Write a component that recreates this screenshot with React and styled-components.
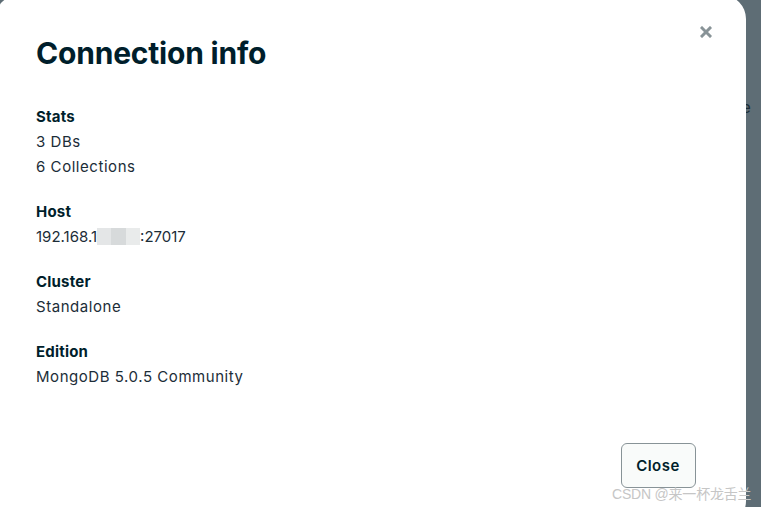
import React from 'react'
import styled, { createGlobalStyle } from 'styled-components'

const GlobalStyle = createGlobalStyle`
    html, body {
        margin: 0;
        padding: 0;
        overflow: hidden;
    }
    body {
        font-family: Inter, 'Noto Sans', sans-serif;
        background: #5e6d75;
    }
`

const stats = [
    { label: 'Stats', values: ['3 DBs', '6 Collections'] },
    { label: 'Host', host: true },
    { label: 'Cluster', values: ['Standalone'] },
    { label: 'Edition', values: ['MongoDB 5.0.5 Community'] },
]

const CloseIcon = () => (
    <svg width="12" height="12" viewBox="0 0 12 12">
        <path d="M2 2 L10 10 M10 2 L2 10" stroke="#889397" strokeWidth="3" strokeLinecap="square" />
    </svg>
)

const ConnectionInfo = () => {
    return (
        <Page>
            <GlobalStyle />
            <Modal>
                <Header>
                    <Title>Connection info</Title>
                    <IconButton aria-label="Close">
                        <CloseIcon />
                    </IconButton>
                </Header>
                <Sections>
                    {stats.map((item) => (
                        <Section key={item.label}>
                            <Label>{item.label}</Label>
                            {item.host ? (
                                <Value $tight>
                                    192.168.1
                                    <Blur>
                                        <span />
                                        <span />
                                        <span />
                                    </Blur>
                                    :27017
                                </Value>
                            ) : (
                                item.values.map((v) => <Value key={v}>{v}</Value>)
                            )}
                        </Section>
                    ))}
                </Sections>
                <Footer>
                    <Button>Close</Button>
                </Footer>
            </Modal>
            <Backdrop>
                <span>e</span>
            </Backdrop>
            <Watermark>CSDN @来一杯龙舌兰</Watermark>
        </Page>
    )
}

const Page = styled.div`
    position: relative;
    display: flex;
    height: 507px;
    width: 761px;
    overflow: hidden;
`

const Modal = styled.div`
    flex: none;
    box-sizing: border-box;
    width: 750.5px;
    height: 530px;
    margin: -5px 0 0 -5px;
    padding: 40px 50px 0 41px;
    background: #ffffff;
    border-radius: 24px;
    display: flex;
    flex-direction: column;
`

const Header = styled.div`
    display: flex;
    justify-content: space-between;
    align-items: flex-start;
`

const Title = styled.h1`
    margin: 0;
    font-size: 30px;
    line-height: 36px;
    font-weight: 700;
    color: #001e2b;
    letter-spacing: -0.2px;
`

const IconButton = styled.button`
    border: none;
    background: none;
    padding: 0;
    margin: -9px -16px 0 0;
    width: 12px;
    height: 12px;
    display: flex;
    cursor: pointer;
`

const Sections = styled.div`
    display: flex;
    flex-direction: column;
    gap: 20px;
    margin-top: 33px;
`

const Section = styled.div`
    display: flex;
    flex-direction: column;
`

const Label = styled.div`
    font-size: 15px;
    line-height: 25px;
    font-weight: 700;
    letter-spacing: 0.2px;
    color: #001e2b;
`

const Value = styled.div`
    display: flex;
    align-items: center;
    font-size: 15px;
    line-height: 25px;
    letter-spacing: ${(p) => (p.$tight ? '0' : '0.55px')};
    color: #1c2d38;
`

const Blur = styled.span`
    display: inline-flex;
    width: 43px;
    height: 17px;
    span {
        flex: 1;
        background: #e4e6e7;
    }
    span:nth-child(2) {
        background: #d7dadb;
    }
    span:nth-child(3) {
        background: #e9ebeb;
    }
`

const Footer = styled.div`
    display: flex;
    justify-content: flex-end;
    margin-top: auto;
    padding-bottom: 37px;
`

const Button = styled.button`
    box-sizing: border-box;
    width: 75px;
    height: 45px;
    border: 1px solid #889397;
    border-radius: 6px;
    background: #f9fbfa;
    color: #001e2b;
    font-family: Inter, sans-serif;
    font-size: 15px;
    font-weight: 600;
    letter-spacing: 0.5px;
    cursor: pointer;
`

const Backdrop = styled.div`
    flex: 1;
    overflow: hidden;
    padding-top: 97px;
    color: #1c2d38;
    font-size: 16px;
    span {
        display: block;
        margin-left: -4px;
    }
`

const Watermark = styled.div`
    position: absolute;
    left: 612px;
    top: 483px;
    font-family: 'Liberation Sans', 'Noto Sans CJK SC', sans-serif;
    font-size: 14px;
    letter-spacing: -0.2px;
    color: #c6c6c6;
    white-space: nowrap;
`

export default ConnectionInfo
